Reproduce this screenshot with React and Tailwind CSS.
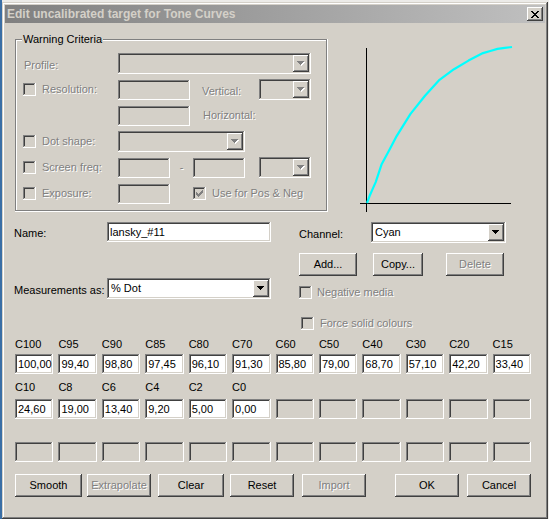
import React from 'react';

const raised = 'shadow-[inset_-1px_-1px_0_#404040,inset_1px_1px_0_#ffffff,inset_-2px_-2px_0_#808080,inset_2px_2px_0_#d4d0c8]';
const sunken = 'shadow-[inset_-1px_-1px_0_#ffffff,inset_1px_1px_0_#808080,inset_-2px_-2px_0_#d4d0c8,inset_2px_2px_0_#404040]';
const dim = 'text-[#808080] [text-shadow:1px_1px_0_#ffffff]';

function Field({ className = '', value, disabled }) {
  return (
    <div className={`h-[20px] flex items-center pl-[3px] text-[11px] leading-none text-black ${sunken} ${disabled ? 'bg-[#d4d0c8]' : 'bg-white'} ${className}`}>
      {value}
    </div>
  );
}

function Arrow({ disabled }) {
  const rows = [[0, 7], [1, 5], [2, 3], [3, 1]];
  return (
    <svg width="8" height="5" viewBox="0 0 8 5" shapeRendering="crispEdges">
      {disabled && rows.map(([y, w]) => <rect key={'s' + y} x={y + 1} y={y + 1} width={w} height="1" fill="#ffffff" />)}
      {rows.map(([y, w]) => <rect key={y} x={y} y={y} width={w} height="1" fill={disabled ? '#808080' : '#000000'} />)}
    </svg>
  );
}

function Select({ className = '', value, disabled }) {
  return (
    <div className={`h-[21px] flex p-[2px] ${sunken} ${disabled ? 'bg-[#d4d0c8]' : 'bg-white'} ${className}`}>
      <div className="flex-1 flex items-center pl-[2px] text-[11px] leading-none text-black">{value}</div>
      <div className={`w-[16px] flex items-center justify-center bg-[#d4d0c8] ${raised}`}>
        <Arrow disabled={disabled} />
      </div>
    </div>
  );
}

function Check({ checked }) {
  const mark = [[6, 0, 1], [5, 1, 2], [0, 2, 1], [4, 2, 3], [0, 3, 2], [3, 3, 3], [0, 4, 5], [1, 5, 3], [2, 6, 1]];
  return (
    <div className={`w-[13px] h-[13px] shrink-0 bg-[#d4d0c8] flex items-center justify-center ${sunken}`}>
      {checked && (
        <svg width="7" height="7" viewBox="0 0 7 7" shapeRendering="crispEdges">
          {mark.map(([x, y, w], i) => <rect key={i} x={x} y={y} width={w} height="1" fill="#808080" />)}
        </svg>
      )}
    </div>
  );
}

function Btn({ children, className = '', disabled }) {
  return (
    <button type="button" className={`h-[23px] flex items-center justify-center bg-[#d4d0c8] text-[11px] leading-none ${raised} ${disabled ? dim : 'text-black'} ${className}`}>
      {children}
    </button>
  );
}

function Label({ children, className = '', disabled }) {
  return <span className={`text-[11px] leading-[13px] whitespace-nowrap ${disabled ? dim : 'text-black'} ${className}`}>{children}</span>;
}

const curve = [[0, 0], [2, 5], [4, 9.2], [6, 13.4], [8, 19], [10, 24.6], [15, 33.4], [20, 42.2], [30, 57.1], [40, 68.7], [50, 79], [60, 85.8], [70, 91.3], [80, 96.1], [85, 97.45], [90, 98.8], [95, 99.4], [100, 100]];

function Graph() {
  const pts = curve.map(([p, v]) => `${(17 + p * 1.45).toFixed(1)},${(164 - v * 1.56).toFixed(1)}`).join(' ');
  return (
    <svg width="170" height="173" viewBox="0 0 170 173" className="ml-[22px] shrink-0">
      <line x1="16.5" y1="9" x2="16.5" y2="173" stroke="#000" strokeWidth="1" />
      <line x1="10" y1="164.5" x2="161" y2="164.5" stroke="#000" strokeWidth="1" />
      <polyline points={pts} fill="none" stroke="#00ffff" strokeWidth="2.2" strokeLinejoin="round" />
    </svg>
  );
}

const row1 = [['C100', '100,00'], ['C95', '99,40'], ['C90', '98,80'], ['C85', '97,45'], ['C80', '96,10'], ['C70', '91,30'], ['C60', '85,80'], ['C50', '79,00'], ['C40', '68,70'], ['C30', '57,10'], ['C20', '42,20'], ['C15', '33,40']];
const row2 = [['C10', '24,60'], ['C8', '19,00'], ['C6', '13,40'], ['C4', '9,20'], ['C2', '5,00'], ['C0', '0,00']];

export default function App() {
  return (
    <div className="w-[549px] h-[519px] overflow-hidden bg-[#ecebe8] border-l-2 border-[#3a6ea5] pt-[2px] font-['Liberation_Sans',Arial,sans-serif]">
      <div className={`w-[546px] h-[517px] bg-[#d4d0c8] p-[3px] flex flex-col shadow-[inset_-1px_-1px_0_#404040,inset_1px_1px_0_#d4d0c8,inset_-2px_-2px_0_#808080,inset_2px_2px_0_#ffffff]`}>
        {/* title bar */}
        <div className="h-[18px] shrink-0 flex items-center bg-linear-to-r from-[#808080] to-[#c0c0c0]">
          <span className="pl-[2px] flex-1 text-[12px] font-bold leading-none text-[#d4d0c8]">Edit uncalibrated target for Tone Curves</span>
          <div className={`w-[16px] h-[14px] mr-[2px] bg-[#d4d0c8] flex items-center justify-center ${raised}`}>
            <svg width="8" height="7" viewBox="0 0 8 7" shapeRendering="crispEdges">
              {[0, 1, 2, 3, 4, 5, 6].map(i => (
                <g key={i}>
                  <rect x={i} y={i} width="2" height="1" fill="#000" />
                  <rect x={6 - i} y={i} width="2" height="1" fill="#000" />
                </g>
              ))}
            </svg>
          </div>
        </div>

        {/* warning criteria + graph */}
        <div className="flex items-start mt-[16px] ml-[10px]">
          <div className="relative w-[313px] h-[173px] shrink-0 shadow-[inset_-1px_-1px_0_#ffffff,inset_-2px_-2px_0_#808080,inset_1px_1px_0_#808080,inset_2px_2px_0_#ffffff]">
            <span className="absolute left-[7px] -top-[6px] px-[1px] bg-[#d4d0c8] text-[11px] leading-[13px] text-black">Warning Criteria</span>
            <div className="flex flex-col gap-[5px] pt-[14px] pl-[8px]">
              <div className="flex items-center h-[21px]">
                <div className="w-[95px] pl-[1px]"><Label disabled>Profile:</Label></div>
                <Select disabled className="w-[193px]" />
              </div>
              <div className="flex items-center h-[21px]">
                <div className="w-[95px] flex items-center gap-[6px]"><Check /><Label disabled>Resolution:</Label></div>
                <Field disabled className="w-[72px]" />
                <div className="w-[57px] ml-[12px]"><Label disabled>Vertical:</Label></div>
                <Select disabled className="w-[52px]" />
              </div>
              <div className="flex items-center h-[21px]">
                <div className="w-[95px]" />
                <Field disabled className="w-[72px]" />
                <Label disabled className="ml-[13px]">Horizontal:</Label>
              </div>
              <div className="flex items-center h-[21px]">
                <div className="w-[95px] flex items-center gap-[6px]"><Check /><Label disabled>Dot shape:</Label></div>
                <Select disabled className="w-[127px]" />
              </div>
              <div className="flex items-center h-[21px]">
                <div className="w-[95px] flex items-center gap-[6px]"><Check /><Label disabled>Screen freq:</Label></div>
                <Field disabled className="w-[52px]" />
                <div className="w-[23px] flex justify-center"><Label disabled>-</Label></div>
                <Field disabled className="w-[52px]" />
                <Select disabled className="w-[52px] ml-[14px]" />
              </div>
              <div className="flex items-center h-[21px]">
                <div className="w-[95px] flex items-center gap-[6px]"><Check /><Label disabled>Exposure:</Label></div>
                <Field disabled className="w-[52px]" />
                <div className="ml-[23px] flex items-center gap-[6px]"><Check checked /><Label disabled>Use for Pos &amp; Neg</Label></div>
              </div>
            </div>
          </div>
          <Graph />
        </div>

        {/* name / channel */}
        <div className="flex mt-[10px] ml-[9px]">
          <div className="w-[257px] shrink-0 flex flex-col">
            <div className="flex items-center h-[20px]">
              <div className="w-[93px]"><Label>Name:</Label></div>
              <Field value="lansky_#11" className="w-[164px]" />
            </div>
            <div className="flex items-center h-[21px] mt-[36px]">
              <div className="w-[93px]"><Label>Measurements as:</Label></div>
              <Select value="% Dot" className="w-[164px]" />
            </div>
          </div>
          <div className="ml-[28px] flex flex-col">
            <div className="flex items-center h-[21px]">
              <div className="w-[72px]"><Label>Channel:</Label></div>
              <Select value="Cyan" className="w-[135px]" />
            </div>
            <div className="flex mt-[10px]">
              <Btn className="w-[58px] h-[21px]">Add...</Btn>
              <Btn className="w-[50px] h-[21px] ml-[16px]">Copy...</Btn>
              <Btn disabled className="w-[58px] h-[21px] ml-[23px]">Delete</Btn>
            </div>
            <div className="flex items-center gap-[5px] mt-[10px] h-[13px]">
              <Check /><Label disabled>Negative media</Label>
            </div>
            <div className="flex items-center gap-[6px] mt-[18px] ml-[2px] h-[13px]">
              <Check /><Label disabled>Force solid colours</Label>
            </div>
          </div>
        </div>

        {/* measurement grid */}
        <div className="ml-[10px] mt-[7px] w-[516px]">
          <div className="grid grid-cols-12 gap-x-[5px]">
            {row1.map(([k]) => <div key={k} className="h-[14px] flex items-center"><Label>{k}</Label></div>)}
          </div>
          <div className="grid grid-cols-12 gap-x-[5px] mt-[3px]">
            {row1.map(([k, v]) => <Field key={k} value={v} />)}
          </div>
          <div className="grid grid-cols-12 gap-x-[5px] mt-[6px]">
            {row2.map(([k]) => <div key={k} className="h-[14px] flex items-center"><Label>{k}</Label></div>)}
          </div>
          <div className="grid grid-cols-12 gap-x-[5px] mt-[5px]">
            {row2.map(([k, v]) => <Field key={k} value={v} />)}
            {[0, 1, 2, 3, 4, 5].map(i => <Field key={'e' + i} disabled />)}
          </div>
          <div className="grid grid-cols-12 gap-x-[5px] mt-[23px]">
            {[0, 1, 2, 3, 4, 5, 6, 7, 8, 9, 10, 11].map(i => <Field key={i} disabled />)}
          </div>
        </div>

        {/* buttons */}
        <div className="flex ml-[10px] mt-[12px]">
          <Btn className="w-[67px]">Smooth</Btn>
          <Btn disabled className="w-[64px] ml-[5px]">Extrapolate</Btn>
          <Btn className="w-[66px] ml-[7px]">Clear</Btn>
          <Btn className="w-[64px] ml-[6px]">Reset</Btn>
          <Btn disabled className="w-[64px] ml-[8px]">Import</Btn>
          <Btn className="w-[64px] ml-[29px]">OK</Btn>
          <Btn className="w-[64px] ml-[8px]">Cancel</Btn>
        </div>
      </div>
    </div>
  );
}
